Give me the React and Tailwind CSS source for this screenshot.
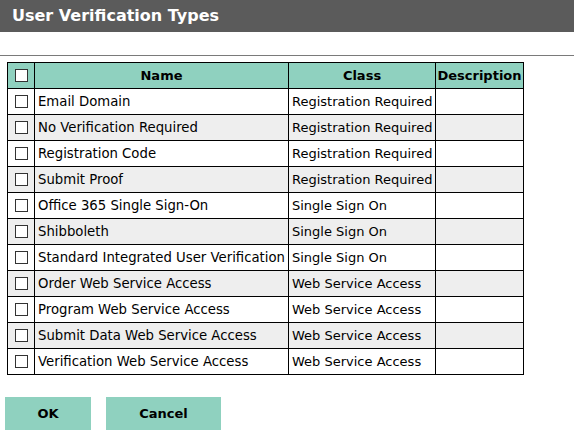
const rows = [
  ['Email Domain', 'Registration Required'],
  ['No Verification Required', 'Registration Required'],
  ['Registration Code', 'Registration Required'],
  ['Submit Proof', 'Registration Required'],
  ['Office 365 Single Sign-On', 'Single Sign On'],
  ['Shibboleth', 'Single Sign On'],
  ['Standard Integrated User Verification', 'Single Sign On'],
  ['Order Web Service Access', 'Web Service Access'],
  ['Program Web Service Access', 'Web Service Access'],
  ['Submit Data Web Service Access', 'Web Service Access'],
  ['Verification Web Service Access', 'Web Service Access'],
];

function Box() {
  return <span className="block w-[13px] h-[13px] border border-[#333] bg-white mx-auto" />;
}

export default function App() {
  return (
    <div className="w-[574px] h-[441px] bg-white font-['DejaVu_Sans',Verdana,sans-serif] text-black overflow-hidden">
      {/* title bar */}
      <div className="h-[32px] bg-[#5b5b5b] px-[12px] flex items-center">
        <h1 className="text-white font-bold text-[16px] leading-none">User Verification Types</h1>
      </div>

      <div className="mt-[23px] border-t border-[#7a7a7a]" />

      <div className="pt-[6px] pl-[7px]">
        <table className="table-fixed w-[517px] border-collapse border border-black text-[13px]">
          <colgroup>
            <col className="w-[27px]" />
            <col className="w-[254px]" />
            <col className="w-[147px]" />
            <col className="w-[88px]" />
          </colgroup>
          <thead>
            <tr className="h-[26px] bg-[#8fd1bf]">
              <th className="border border-black p-0"><Box /></th>
              <th className="border border-black font-bold">Name</th>
              <th className="border border-black font-bold">Class</th>
              <th className="border border-black font-bold p-0 whitespace-nowrap">Description</th>
            </tr>
          </thead>
          <tbody>
            {rows.map(([name, cls], i) => (
              <tr key={name} className={i % 2 === 1 ? 'h-[26px] bg-[#eeeeee]' : 'h-[26px] bg-white'}>
                <td className="border border-black p-0"><Box /></td>
                <td className="border border-black px-[3px] whitespace-nowrap text-[13.25px]">{name}</td>
                <td className="border border-black px-[3px] whitespace-nowrap">{cls}</td>
                <td className="border border-black" />
              </tr>
            ))}
          </tbody>
        </table>
      </div>

      {/* actions */}
      <div className="flex gap-[15px] pl-[5px] mt-[22px]">
        <button className="w-[86px] h-[33px] bg-[#8fd1bf] font-bold text-[13px]">OK</button>
        <button className="w-[115px] h-[33px] bg-[#8fd1bf] font-bold text-[13px]">Cancel</button>
      </div>
    </div>
  );
}
